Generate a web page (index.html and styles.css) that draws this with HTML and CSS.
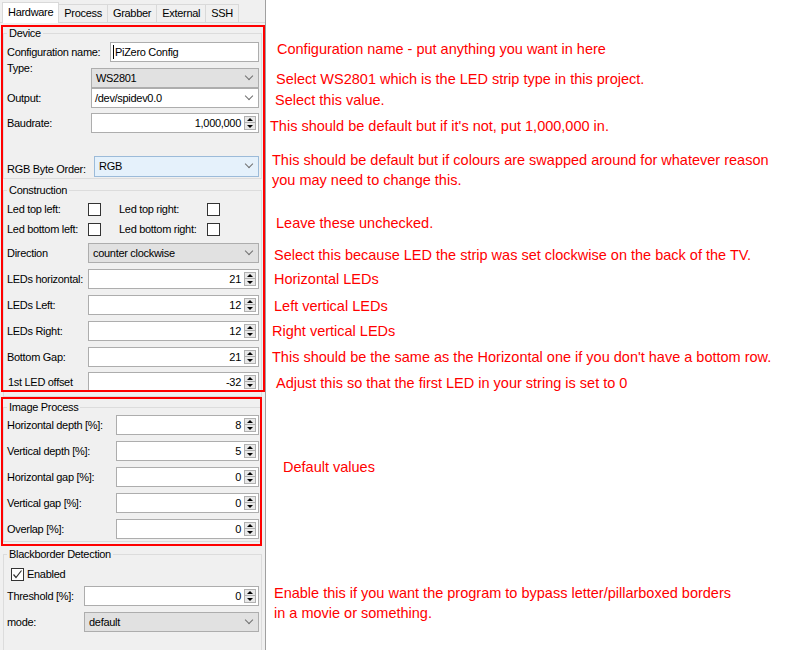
FILE: index.html
```html
<!DOCTYPE html>
<html lang="en">
<head>
  <meta charset="UTF-8">
  <title>Hyperion - Hardware</title>
  <link rel="stylesheet" href="styles.css">
</head>
<body>
  <div class="page">
    <!-- Panel de configuración -->
    <div class="panel">
      <div class="tabs">
        <span class="tab active">Hardware</span>
        <span class="tab">Process</span>
        <span class="tab">Grabber</span>
        <span class="tab">External</span>
        <span class="tab">SSH</span>
      </div>

      <fieldset class="group g-device">
        <legend>Device</legend>
        <div class="row r-name">
          <span class="lbl">Configuration name:</span>
          <div class="field text"><span class="caret"></span>PiZero Config</div>
        </div>
        <div class="row r-type">
          <span class="lbl">Type:</span>
          <div class="field combo">WS2801</div>
        </div>
        <div class="row r-output">
          <span class="lbl">Output:</span>
          <div class="field combo edit">/dev/spidev0.0</div>
        </div>
        <div class="row r-baud">
          <span class="lbl">Baudrate:</span>
          <div class="field spin"><span class="num">1,000,000</span><span class="btns"><i class="up"></i><i class="down"></i></span></div>
        </div>
        <div class="row r-rgb">
          <span class="lbl">RGB Byte Order:</span>
          <div class="field combo hover">RGB</div>
        </div>
      </fieldset>

      <fieldset class="group g-build">
        <legend>Construction</legend>
        <div class="row check-row">
          <span class="lbl">Led top left:</span><span class="box"></span>
          <span class="lbl second">Led top right:</span><span class="box"></span>
        </div>
        <div class="row check-row">
          <span class="lbl">Led bottom left:</span><span class="box"></span>
          <span class="lbl second">Led bottom right:</span><span class="box"></span>
        </div>
        <div class="row r-dir">
          <span class="lbl">Direction</span>
          <div class="field combo">counter clockwise</div>
        </div>
        <div class="row">
          <span class="lbl">LEDs horizontal:</span>
          <div class="field spin"><span class="num">21</span><span class="btns"><i class="up"></i><i class="down"></i></span></div>
        </div>
        <div class="row">
          <span class="lbl">LEDs Left:</span>
          <div class="field spin"><span class="num">12</span><span class="btns"><i class="up"></i><i class="down"></i></span></div>
        </div>
        <div class="row">
          <span class="lbl">LEDs Right:</span>
          <div class="field spin"><span class="num">12</span><span class="btns"><i class="up"></i><i class="down"></i></span></div>
        </div>
        <div class="row">
          <span class="lbl">Bottom Gap:</span>
          <div class="field spin"><span class="num">21</span><span class="btns"><i class="up"></i><i class="down"></i></span></div>
        </div>
        <div class="row r-offset">
          <span class="lbl">1st LED offset</span>
          <div class="field spin"><span class="num">-32</span><span class="btns"><i class="up"></i><i class="down"></i></span></div>
        </div>
      </fieldset>

      <fieldset class="group g-image">
        <legend>Image Process</legend>
        <div class="row">
          <span class="lbl">Horizontal depth [%]:</span>
          <div class="field spin"><span class="num">8</span><span class="btns"><i class="up"></i><i class="down"></i></span></div>
        </div>
        <div class="row">
          <span class="lbl">Vertical depth [%]:</span>
          <div class="field spin"><span class="num">5</span><span class="btns"><i class="up"></i><i class="down"></i></span></div>
        </div>
        <div class="row">
          <span class="lbl">Horizontal gap [%]:</span>
          <div class="field spin"><span class="num">0</span><span class="btns"><i class="up"></i><i class="down"></i></span></div>
        </div>
        <div class="row">
          <span class="lbl">Vertical gap [%]:</span>
          <div class="field spin"><span class="num">0</span><span class="btns"><i class="up"></i><i class="down"></i></span></div>
        </div>
        <div class="row">
          <span class="lbl">Overlap [%]:</span>
          <div class="field spin"><span class="num">0</span><span class="btns"><i class="up"></i><i class="down"></i></span></div>
        </div>
      </fieldset>

      <fieldset class="group g-black">
        <legend>Blackborder Detection</legend>
        <div class="row r-enabled">
          <span class="box checked">
            <svg width="11" height="11" viewBox="0 0 11 11"><polyline points="1.5,5.5 4,8.5 9.5,1.5" fill="none" stroke="#333" stroke-width="1.2"/></svg>
          </span>
          <span>Enabled</span>
        </div>
        <div class="row r-threshold">
          <span class="lbl">Threshold [%]:</span>
          <div class="field spin"><span class="num">0</span><span class="btns"><i class="up"></i><i class="down"></i></span></div>
        </div>
        <div class="row r-mode">
          <span class="lbl">mode:</span>
          <div class="field combo">default</div>
        </div>
      </fieldset>

      <!-- Marcas rojas encima de la captura -->
      <div class="mark mark-a"></div>
      <div class="mark mark-b"></div>
    </div>

    <!-- Notas -->
    <div class="notes">
      <p>Configuration name - put anything you want in here</p>
      <p>Select WS2801 which is the LED strip type in this project.</p>
      <p>Select this value.</p>
      <p>This should be default but if it's not, put 1,000,000 in.</p>
      <p>This should be default but if colours are swapped around for whatever reason<br>you may need to change this.</p>
      <p>Leave these unchecked.</p>
      <p>Select this because LED the strip was set clockwise on the back of the TV.</p>
      <p>Horizontal LEDs</p>
      <p>Left vertical LEDs</p>
      <p>Right vertical LEDs</p>
      <p>This should be the same as the Horizontal one if you don't have a bottom row.</p>
      <p>Adjust this so that the first LED in your string is set to 0</p>
      <p>Default values</p>
      <p>Enable this if you want the program to bypass letter/pillarboxed borders<br>in a movie or something.</p>
    </div>
  </div>
</body>
</html>
```

FILE: styles.css
```css
* {
  box-sizing: border-box;
}
body {
  margin: 0;
  background-color: #fff;
  font-family: "Liberation Sans", Arial, sans-serif;
}
.page {
  display: flex;
  height: 650px;
  overflow: hidden;
}

/* panel izquierdo */
.panel {
  position: relative;
  flex: none;
  width: 266px;
  height: 650px;
  overflow: hidden;
  background-color: #f0f0f0;
  border-right: 1px solid #a0a0a0;
  font-size: 11px;
  letter-spacing: -0.3px;
  color: #000;
}
.tabs {
  display: flex;
  align-items: flex-end;
  height: 23px;
  padding-left: 2px;
  border-bottom: 1px solid #d9d9d9;
}
.tab {
  height: 18px;
  line-height: 17px;
  padding: 0 5px;
  background-color: #f0f0f0;
  border: 1px solid #d9d9d9;
  border-left: none;
  border-bottom: none;
}
.tab.active {
  height: 21px;
  line-height: 18px;
  margin-bottom: -1px;
  background-color: #fff;
  border-left: 1px solid #d9d9d9;
}

.group {
  margin: 0 3px;
  min-width: 0;
  padding: 3px 2px 2px 3px;
  border: 1px solid #dcdcdc;
}
.group legend {
  padding: 0 2px;
  line-height: 12px;
}
.g-device {
  margin-top: 4px;
}
.g-build {
  margin-top: 5px;
  padding-bottom: 4px;
}
.g-image {
  margin-top: 4px;
  padding-top: 2px;
}
.g-black {
  margin-top: 6px;
  padding-top: 4px;
  padding-bottom: 40px;
}

.row {
  display: flex;
  align-items: center;
  height: 20px;
  margin-top: 6px;
}
.row:first-of-type {
  margin-top: 0;
}
.lbl {
  flex: none;
  white-space: nowrap;
}
.g-device .lbl { width: 84px; }
.g-device .r-name .lbl { width: 103px; }
.g-device .r-rgb .lbl { width: 87px; margin-top: 6px; }
.g-build .lbl { width: 81px; }
.g-image .lbl { width: 109px; }
.g-black .lbl { width: 77px; }

.r-type .lbl {
  align-self: flex-start;
  margin-top: -6px;
}
.r-output { margin-top: 0; }
.r-baud { margin-top: 5px; }
.r-rgb { margin-top: 23px; }
.check-row { margin-top: 0; }
.r-dir { margin-top: 4px; }
.r-offset { margin-top: 5px; }
.r-offset .lbl { padding-left: 1px; }
.r-threshold { margin-top: 2px; }

/* controles */
.field {
  flex: 1;
  display: flex;
  align-items: center;
  height: 20px;
  min-width: 0;
  border: 1px solid #adadad;
  background-color: #fff;
  white-space: nowrap;
}
.text {
  padding-left: 2px;
}
.caret {
  width: 1px;
  height: 14px;
  margin-right: 1px;
  background-color: #000;
}
.combo {
  justify-content: space-between;
  padding: 0 6px 0 4px;
  background-color: #e1e1e1;
}
.combo.edit {
  background-color: #fff;
  padding-left: 3px;
}
.combo.hover {
  height: 21px;
  background-color: #e5f1fb;
  border-color: #9cbbd9;
}
.combo::after {
  content: "";
  width: 5px;
  height: 5px;
  margin-top: -4px;
  border-right: 1px solid #707070;
  border-bottom: 1px solid #707070;
  transform: rotate(45deg);
}
.spin {
  padding: 0 2px 0 4px;
}
.num {
  flex: 1;
  text-align: right;
  padding-right: 3px;
}
.btns {
  display: flex;
  flex-direction: column;
  width: 12px;
}
.btns i {
  display: flex;
  align-items: center;
  justify-content: center;
  height: 7px;
  background-color: #e8e8e8;
  border: 1px solid #b0b0b0;
}
.btns i + i {
  border-top: none;
}
.btns .up::after {
  content: "";
  border-left: 3px solid transparent;
  border-right: 3px solid transparent;
  border-bottom: 3px solid #000;
}
.btns .down::after {
  content: "";
  border-left: 3px solid transparent;
  border-right: 3px solid transparent;
  border-top: 3px solid #000;
}

.box {
  flex: none;
  width: 13px;
  height: 13px;
  background-color: #fff;
  border: 1px solid #333;
}
.lbl.second {
  width: 88px;
  margin-left: 18px;
}
.r-enabled {
  gap: 3px;
  padding-left: 4px;
}
.checked {
  display: flex;
  align-items: center;
  justify-content: center;
}

/* rectángulos rojos */
.mark {
  position: absolute;
  left: 1px;
  border: 2px solid #ff0000;
  pointer-events: none;
}
.mark-a {
  top: 25px;
  width: 264px;
  height: 367px;
}
.mark-b {
  top: 397px;
  width: 261px;
  height: 149px;
}

/* notas */
.notes {
  flex: 1;
  padding-left: 4px;
  font-size: 14.5px;
  color: #ff0000;
}
.notes p {
  margin: 0;
  line-height: 20px;
  white-space: nowrap;
}
.notes p:nth-child(1) { margin-top: 39px; margin-left: 7px; }
.notes p:nth-child(2) { margin-top: 10px; margin-left: 6px; }
.notes p:nth-child(3) { margin-top: 1px; margin-left: 5px; }
.notes p:nth-child(4) { margin-top: 6px; }
.notes p:nth-child(5) { margin-top: 14px; margin-left: 2px; }
.notes p:nth-child(6) { margin-top: 23px; margin-left: 6px; }
.notes p:nth-child(7) { margin-top: 12px; margin-left: 4px; }
.notes p:nth-child(8) { margin-top: 4px; margin-left: 4px; }
.notes p:nth-child(9) { margin-top: 7px; margin-left: 4px; }
.notes p:nth-child(10) { margin-top: 5px; margin-left: 2px; }
.notes p:nth-child(11) { margin-top: 6px; margin-left: 2px; }
.notes p:nth-child(12) { margin-top: 6px; margin-left: 6px; }
.notes p:nth-child(13) { margin-top: 64px; margin-left: 13px; }
.notes p:nth-child(14) { margin-top: 106px; margin-left: 4px; }
```
